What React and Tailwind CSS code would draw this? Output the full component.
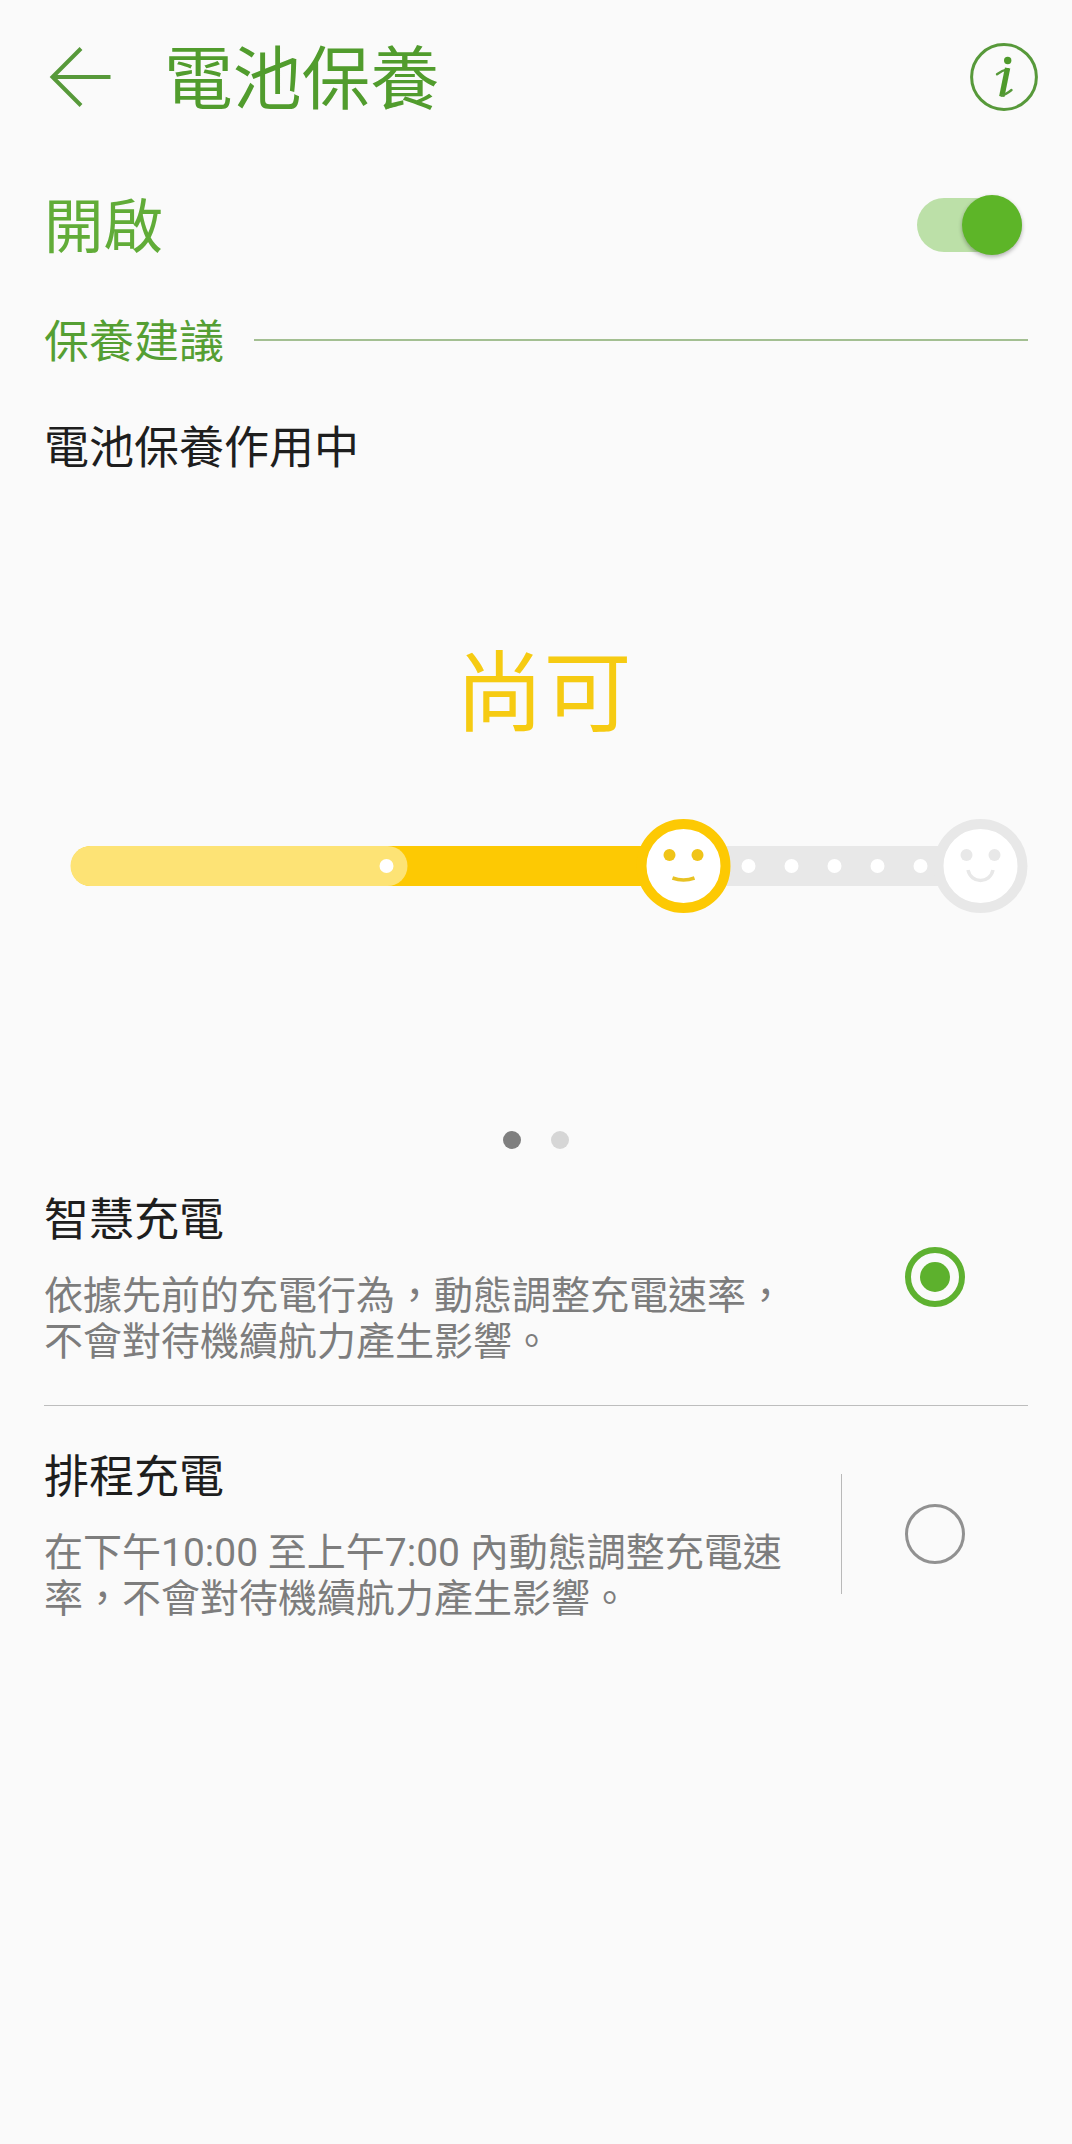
import { useState } from 'react'

const STEP_DOTS = [748.5, 791.5, 834.5, 877.5, 920.5]

function BackIcon() {
  return (
    <svg className="w-[62px] h-[60px]" viewBox="0 0 62 60" fill="none" stroke="#57993a" strokeWidth="4">
      <path d="M32 1.5 L3.5 30 L32 58.5" />
      <path d="M3.5 30 H61.5" />
    </svg>
  )
}

function InfoIcon() {
  return (
    <svg className="w-[68px] h-[68px]" viewBox="0 0 68 68" fill="none" stroke="#57993a">
      <circle cx="34" cy="34" r="32.4" strokeWidth="3" />
      <circle cx="37.7" cy="17.5" r="3.7" fill="#4f9a2c" stroke="none" />
      <path d="M27 31.2 Q32 27.5 38 26.2" strokeWidth="2.4" strokeLinecap="round" />
      <path d="M37.6 25 L31.8 53.5" stroke="#4f9a2c" strokeWidth="5.4" />
      <path d="M31.5 52.5 Q36 51.5 41.5 47" strokeWidth="2.4" strokeLinecap="round" />
    </svg>
  )
}

function Switch({ checked, onChange }) {
  return (
    <button
      type="button"
      role="switch"
      aria-checked={checked}
      onClick={onChange}
      className="flex w-[105px] h-[54px] items-center justify-end rounded-full bg-[#bce0a8]"
    >
      <span className="w-[60px] h-[60px] shrink-0 rounded-full bg-[#5db528] shadow-[0_2px_4px_rgba(0,0,0,0.3)]" />
    </button>
  )
}

function HealthBar() {
  return (
    <svg className="w-[1072px] h-[100px]" viewBox="0 816 1072 100" fill="none">
      {/* Tramo pendiente */}
      <rect x="684" y="846" width="296" height="40" fill="#e8e8e8" />
      {STEP_DOTS.map((x) => (
        <circle key={x} cx={x} cy="866" r="7" fill="#fff" />
      ))}

      {/* Tramo recorrido */}
      <rect x="71" y="846" width="613" height="40" rx="20" fill="#fdc903" />
      <rect x="70.5" y="846" width="337" height="40" rx="20" fill="#fde375" />
      <circle cx="386.5" cy="866" r="7" fill="#fff" />

      {/* Cara neutra */}
      <circle cx="683.5" cy="866" r="42" fill="#fff" stroke="#fdc903" strokeWidth="10" />
      <circle cx="669.5" cy="855" r="6" fill="#f0c418" />
      <circle cx="697.5" cy="855" r="6" fill="#f0c418" />
      <path d="M672.5 878 Q683.5 882 694.5 878" stroke="#e8c224" strokeWidth="3.5" />

      {/* Cara feliz */}
      <circle cx="980.5" cy="866" r="42" fill="#fff" stroke="#e8e8e8" strokeWidth="10" />
      <circle cx="966.5" cy="855" r="6" fill="#e8e8e8" />
      <circle cx="994.5" cy="855" r="6" fill="#e8e8e8" />
      <path d="M968 870 C971 884 990 884 993 870" stroke="#e8e8e8" strokeWidth="3.5" />
    </svg>
  )
}

function Radio({ selected }) {
  return selected ? (
    <span className="flex w-[60px] h-[60px] items-center justify-center rounded-full border-[6px] border-[#5eb130]">
      <span className="w-[30px] h-[30px] rounded-full bg-[#5db12d]" />
    </span>
  ) : (
    <span className="w-[60px] h-[60px] rounded-full border-[3px] border-[#919191]" />
  )
}

function ChargeOption({ title, lines, selected, divided, onSelect }) {
  return (
    <div className="flex h-[256px] pl-[44px] pr-[44px]" onClick={onSelect}>
      <div className="w-[797px] pt-[42px]">
        <h3 className="h-[60px] text-[45px] leading-[60px] text-[#1e1e1e]">{title}</h3>
        <div className="pt-[22px] text-[39px] leading-[46px] text-[#7d7d7d]">
          {lines.map((line) => (
            <p key={line} className="whitespace-nowrap">{line}</p>
          ))}
        </div>
      </div>
      <div className={divided ? 'mt-[68px] h-[120px] w-px bg-[#b9b9b9]' : 'w-px'} />
      <div className="flex flex-1 items-start pl-[63px] pt-[98px]">
        <Radio selected={selected} />
      </div>
    </div>
  )
}

export default function App() {
  const [enabled, setEnabled] = useState(true)
  const [mode, setMode] = useState('smart')

  return (
    <div className="flex flex-col w-[1072px] h-[2144px] overflow-hidden bg-[#fafafa] font-['Roboto','Noto_Sans_CJK_TC',sans-serif]">
      {/* Header */}
      <header className="flex h-[154px] items-center pl-[49px] pr-[34px]">
        <BackIcon />
        <h1 className="flex-1 pl-[53px] pt-[7px] text-[68.8px] leading-[80px] text-[#519c2d]">電池保養</h1>
        <InfoIcon />
      </header>

      <div className="flex h-[142px] items-center justify-between pl-[44px] pr-[50px]">
        <span className="pt-[6px] text-[59.5px] leading-[72px] text-[#61ac38]">開啟</span>
        <Switch checked={enabled} onChange={() => setEnabled(!enabled)} />
      </div>

      <div className="flex h-[88px] items-center gap-[30px] pl-[44px] pr-[44px]">
        <h2 className="pt-[5px] text-[45px] leading-[60px] text-[#559f33]">保養建議</h2>
        <div className="h-[2px] flex-1 bg-[#a3bf92]" />
      </div>

      <p className="h-[124px] pt-[4px] pl-[44px] text-[45px] leading-[122px] text-[#1e1e1e]">電池保養作用中</p>

      <p className="mt-[134px] h-[104px] pl-[15px] text-center text-[88px] leading-[104px] text-[#f6cb12]">尚可</p>

      <div className="mt-[70px] h-[100px]">
        <HealthBar />
      </div>

      <div className="mt-[215px] flex h-[18px] justify-center gap-[30px]">
        <span className="w-[18px] h-[18px] rounded-full bg-[#7f7f7f]" />
        <span className="w-[18px] h-[18px] rounded-full bg-[#d6d6d6]" />
      </div>

      {/* Modos de carga */}
      <ChargeOption
        title="智慧充電"
        lines={['依據先前的充電行為，動態調整充電速率，', '不會對待機續航力產生影響。']}
        selected={mode === 'smart'}
        onSelect={() => setMode('smart')}
      />
      <div className="mx-[44px] h-px bg-[#bdbdbd]" />
      <ChargeOption
        title="排程充電"
        lines={['在下午10:00 至上午7:00 內動態調整充電速', '率，不會對待機續航力產生影響。']}
        selected={mode === 'scheduled'}
        divided
        onSelect={() => setMode('scheduled')}
      />
    </div>
  )
}
